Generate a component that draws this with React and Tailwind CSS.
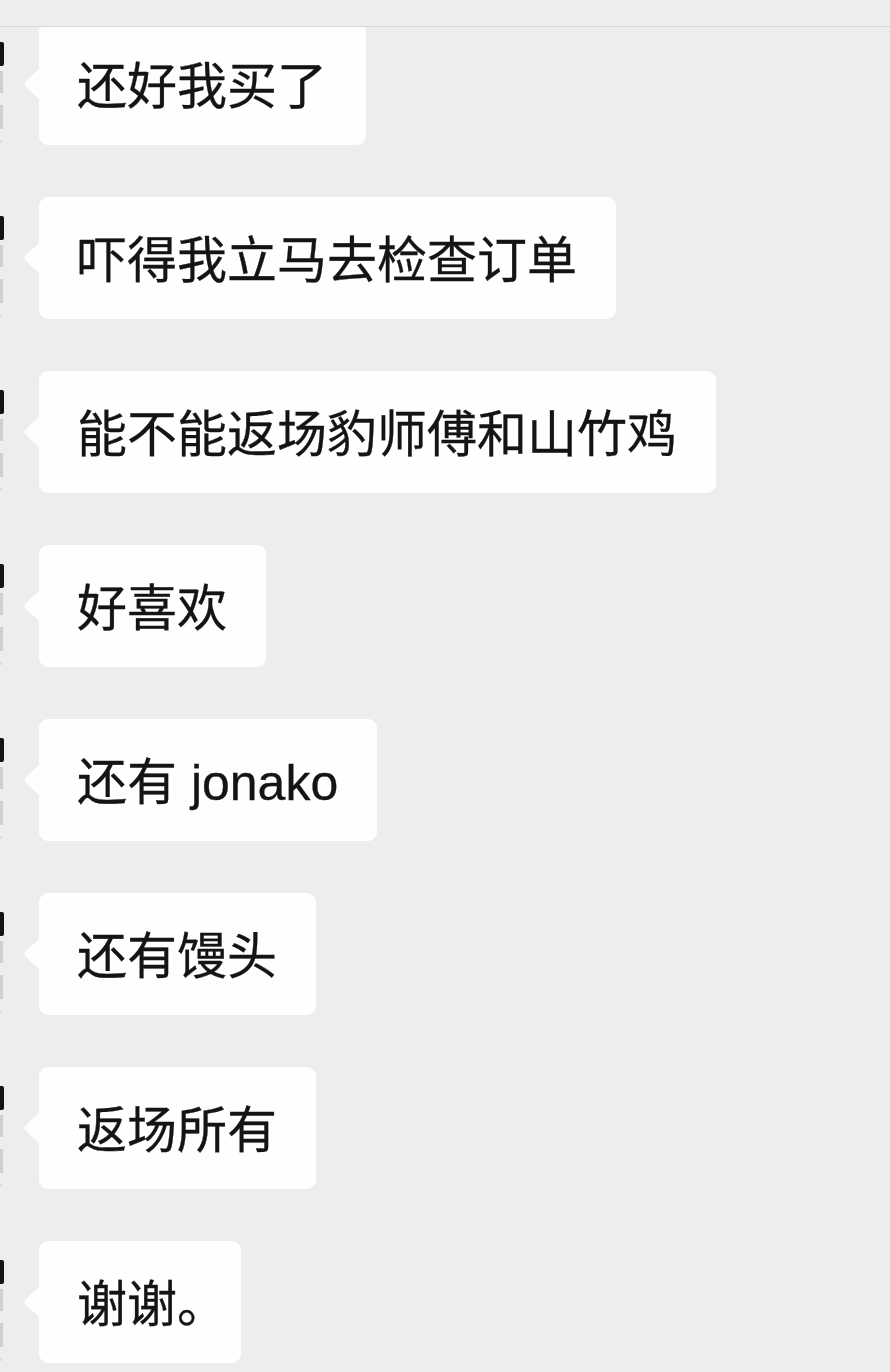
const MESSAGES = [
  '还好我买了',
  '吓得我立马去检查订单',
  '能不能返场豹师傅和山竹鸡',
  '好喜欢',
  '还有 jonako',
  '还有馒头',
  '返场所有',
  '谢谢。',
]

// Left edge: cropped avatar + dashed timeline bits
function EdgeMarks() {
  return (
    <div className="w-[4px] shrink-0 flex flex-col pt-[19px]">
      <div className="w-[4px] h-[24px] bg-[#141414] rounded-r-[2px]" />
      <div className="mt-[5px] w-[3px] h-[22px] bg-[#cfcfcf]" />
      <div className="mt-[12px] w-[3px] h-[24px] bg-[#cfcfcf]" />
      <div className="mt-[11px] w-[2px] h-[3px] bg-[#dcdcdc]" />
    </div>
  )
}

function Bubble({ text }) {
  return (
    <div className="relative ml-[35px] h-[122px] flex items-center bg-[#fefefe] rounded-[9px] pl-[38px] pr-[39px] pt-[6px]">
      <svg className="absolute left-[-16px] top-1/2 -translate-y-1/2" width="17" height="32" viewBox="0 0 17 32">
        <path d="M17 0 L2.6 13.6 Q0.2 16 2.6 18.4 L17 32 Z" fill="#fefefe" />
      </svg>
      <span className="text-[50px] leading-[70px] text-[#141414] whitespace-nowrap [font-feature-settings:'halt'] [-webkit-text-stroke:0.3px_#141414]">
        {text}
      </span>
    </div>
  )
}

export default function App() {
  return (
    <div
      className="w-[890px] h-[1372px] overflow-hidden bg-[#ededed] flex flex-col"
      style={{ fontFamily: '"Liberation Sans", "Noto Sans CJK SC", sans-serif' }}
    >
      <div className="relative z-10 h-[27px] shrink-0 bg-[#ededed] border-b border-[#d8d8d8]" />
      <div className="-mt-[4px] flex flex-col gap-[52px]">
        {MESSAGES.map((m, i) => (
          <div key={i} className="flex items-stretch h-[122px]">
            <EdgeMarks />
            <Bubble text={m} />
          </div>
        ))}
      </div>
    </div>
  )
}
